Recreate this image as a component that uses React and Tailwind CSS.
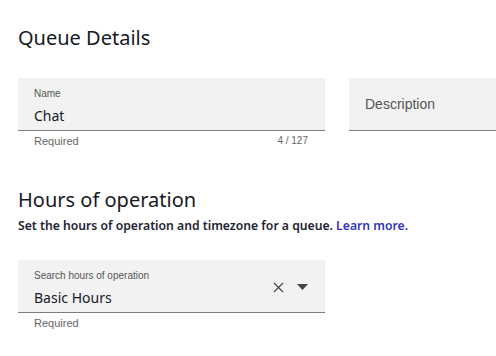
import { FiX } from "react-icons/fi";

function Field({ label, value, hint, count, right, className = "" }) {
    return (
        <div className={className}>
            <div className="h-[53px] bg-[#f2f2f2] border-b border-[#7d7d7d] flex items-center pl-4 pr-4">
                {label ? (
                    <div className="flex-1 flex flex-col pt-[3px]">
                        <span className="text-[10px] leading-[12px] text-[#555] font-['Liberation_Sans',Arial,sans-serif]">
                            {label}
                        </span>
                        <span className="mt-[8px] text-[14px] leading-[16px] text-[#16191f] font-['Noto_Sans',sans-serif]">
                            {value}
                        </span>
                    </div>
                ) : (
                    <span className="flex-1 text-[14px] leading-[16px] text-[#555] font-['Liberation_Sans',Arial,sans-serif]">
                        {value}
                    </span>
                )}
                {right}
            </div>
            {(hint || count) && (
                <div className="flex justify-between pl-4 pr-[17px] pt-[4px] text-[11px] leading-[12px] text-[#666] font-['Liberation_Sans',Arial,sans-serif]">
                    <span>{hint}</span>
                    <span className="text-[10px]">{count}</span>
                </div>
            )}
        </div>
    );
}

export default function App() {
    return (
        <div className="w-[496px] h-[356px] overflow-hidden bg-white pl-[18px] pt-[24px] font-['Noto_Sans',sans-serif]">
            {/* QUEUE DETAILS */}
            <h1 className="text-[20px] leading-[28px] text-[#16191f]">Queue Details</h1>

            <div className="flex gap-6 mt-[26px] w-[520px]">
                <Field className="w-[307px]" label="Name" value="Chat" hint="Required" count="4 / 127" />
                <Field className="flex-1" value="Description" />
            </div>

            {/* HOURS */}
            <h2 className="mt-[39px] text-[20px] leading-[28px] text-[#16191f]">Hours of operation</h2>
            <p className="text-[12.2px] leading-[16px] font-semibold text-[#1d2433] mt-[4px]">
                Set the hours of operation and timezone for a queue.{" "}
                <span className="text-[#3235b8]">Learn more.</span>
            </p>

            <Field
                className="w-[307px] mt-[26px]"
                label="Search hours of operation"
                value="Basic Hours"
                hint="Required"
                right={
                    <div className="flex items-center gap-[10px] text-[#444] mr-[1px] mt-[2px]">
                        <FiX className="w-[17px] h-[17px]" strokeWidth={1.6} />
                        <svg width="11" height="6" viewBox="0 0 11 6">
                            <path d="M0 0h11L5.5 6z" fill="#444" />
                        </svg>
                    </div>
                }
            />
        </div>
    );
}
